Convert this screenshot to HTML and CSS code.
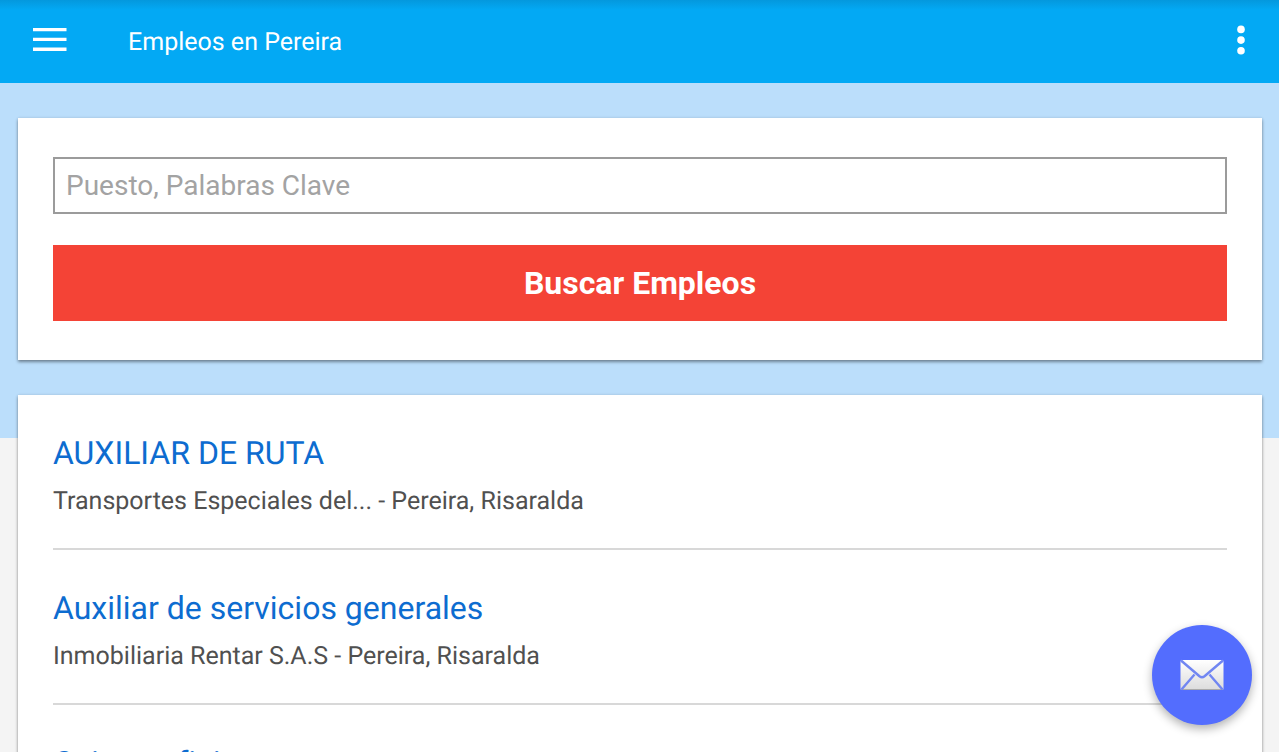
FILE: index.html
```html
<!DOCTYPE html>
<html lang="es">
<head>
<meta charset="utf-8">
<meta name="viewport" content="width=device-width, initial-scale=1">
<title>Empleos en Pereira</title>
<link rel="stylesheet" href="styles.css">
</head>
<body>
<header class="app-bar">
  <button class="icon-button" type="button" aria-label="Menú">
    <svg width="34" height="26" viewBox="0 0 34 26" fill="#fff"><path d="M0 1h33.500v3.300H0zM0 10.800h33.500v3.300H0zM0 20.600h33.500v3.300H0z"/></svg>
  </button>
  <h1 class="app-title">Empleos en Pereira</h1>
  <button class="icon-button" type="button" aria-label="Más opciones">
    <svg width="8" height="30" viewBox="0 0 8 30" fill="#fff"><circle cx="4" cy="4.400" r="3.800"/><circle cx="4" cy="15.100" r="3.800"/><circle cx="4" cy="25.800" r="3.800"/></svg>
  </button>
</header>
<main class="content">
  <form class="card search">
    <input class="search-input" type="text" aria-label="Puesto, Palabras Clave" placeholder="Puesto, Palabras Clave">
    <button class="search-button" type="button">Buscar Empleos</button>
  </form>
  <ul class="card jobs">
    <li class="job">
      <h2 class="job-title"><a class="job-link" href="#">AUXILIAR DE RUTA</a></h2>
      <p class="job-company">Transportes Especiales del... - Pereira, Risaralda</p>
    </li>
    <li class="job">
      <h2 class="job-title"><a class="job-link" href="#">Auxiliar de servicios generales</a></h2>
      <p class="job-company">Inmobiliaria Rentar S.A.S - Pereira, Risaralda</p>
    </li>
    <li class="job">
      <h2 class="job-title"><a class="job-link" href="#">Cajero, oficina</a></h2>
    </li>
  </ul>
</main>
<button class="fab" type="button" aria-label="Enviar correo">
  <svg width="46" height="32" viewBox="0 0 46 32">
    <defs><linearGradient id="paper" x1="0" y1="0" x2="0" y2="1"><stop offset="0" stop-color="#fff"/><stop offset="1" stop-color="#dcdcdc"/></linearGradient></defs>
    <rect x="1.500" y="1" width="43" height="30" rx="1.500" fill="url(#paper)"/>
    <path d="M2 30.500h42" stroke="#aaa" stroke-width="1"/>
    <path d="M2 1.500l18.500 15.700q2.500 2 5 0L44 1.500M2.500 30.500l13-15M43.500 30.500L30.500 15.500" fill="none" stroke="#7186f2" stroke-width="2.400"/>
  </svg>
</button>
</body>
</html>
```
FILE: styles.css
```css
* {
  box-sizing: border-box;
}

html {
  height: 100%;
  overflow: hidden;
}

body {
  height: 100%;
  margin: 0;
  overflow: hidden;
  background: linear-gradient(#bbdefb 438px, #f4f4f4 438px);
  font-family: Roboto, "Liberation Sans", sans-serif;
  font-variant-ligatures: none;
  text-rendering: geometricPrecision;
}

button {
  margin: 0;
  padding: 0;
  border: 0;
  background: none;
  color: #fff;
  font-family: inherit;
}

svg {
  display: block;
}

.app-bar {
  display: flex;
  align-items: center;
  height: 83px;
  padding: 0 34px 4px 33px;
  background: linear-gradient(#0498dd, #03a9f4 10px, #03a9f4);
}

.app-title {
  flex: 1;
  margin: 6px 0 0 61px;
  color: #fff;
  font-size: 25px;
  font-weight: 400;
  line-height: 32px;
}

.content {
  display: flex;
  flex-direction: column;
  gap: 35px;
  padding: 35px 17px 0 18px;
}

.card {
  margin: 0;
  padding: 39px 35px;
  background: #fff;
  box-shadow: 0 2px 3px rgba(0, 0, 0, 0.4), 0 0 3px rgba(0, 0, 0, 0.1);
}

.search {
  display: flex;
  flex-direction: column;
  gap: 31px;
}

.search-input {
  width: 100%;
  height: 57px;
  padding: 0 11px;
  border: 2px solid #9b9b9b;
  border-radius: 0;
  background: #fff;
  color: #444;
  font-family: inherit;
  font-size: 28px;
}

.search-input::placeholder {
  color: #a3a3a3;
  opacity: 1;
}

.search-button {
  height: 76px;
  background: #f44336;
  font-size: 32px;
  font-weight: 700;
}

.card.jobs {
  padding-top: 38px;
  list-style: none;
}

.job {
  margin-bottom: 38px;
  padding: 0 0 29px;
  border-bottom: 2px solid #d8d8d8;
}

.job-title {
  margin: 0;
  font-size: 32px;
  font-weight: 400;
  line-height: 40px;
}

.job-link {
  color: #0d6cd0;
  text-decoration: none;
}

.job-company {
  margin: 12px 0 0;
  color: #505050;
  font-size: 25px;
  line-height: 34px;
}

.fab {
  position: fixed;
  right: 27px;
  bottom: 27px;
  display: grid;
  place-items: center;
  width: 100px;
  height: 100px;
  border-radius: 50%;
  background: #536dfe;
  box-shadow: 0 4px 10px rgba(0, 0, 0, 0.3);
}
```
